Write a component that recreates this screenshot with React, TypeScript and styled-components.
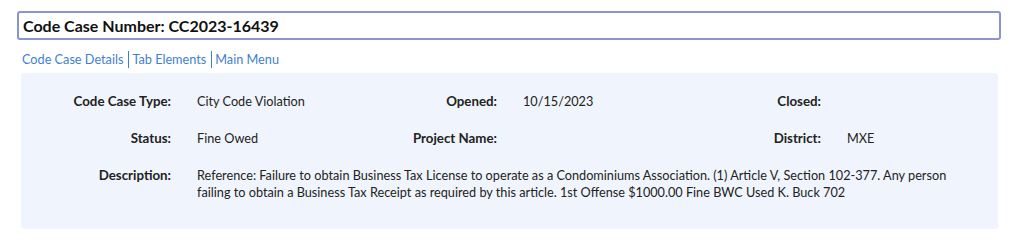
import styled, { createGlobalStyle } from "styled-components";

const GlobalStyle = createGlobalStyle`
  body {
    margin: 0;
    background: #fff;
    font-family: Lato, "Open Sans", Arial, sans-serif;
    color: #222;
  }
`;

const Page = styled.div`
  padding: 11px 23px 0 17px;
`;

const TitleBox = styled.div`
  height: 25px;
  border: 2px solid #8c92d6;
  border-radius: 3px;
  display: flex;
  align-items: center;
  padding: 0 4px;
`;

const Title = styled.h1`
  margin: 0;
  font-size: 16px;
  font-weight: 700;
  color: #111;
`;

const Nav = styled.nav`
  display: flex;
  align-items: center;
  margin: 11px 0 5px 5px;
  font-size: 12.7px;
  line-height: 17px;
`;

const NavLink = styled.a<{ $divider?: boolean }>`
  color: #3f7fd2;
  text-decoration: none;
  cursor: pointer;
  padding-left: ${(p) => (p.$divider ? "3px" : "0")};
  margin-left: ${(p) => (p.$divider ? "5px" : "0")};
  border-left: ${(p) => (p.$divider ? "1px solid #3f7fd2" : "none")};
`;

const Panel = styled.section`
  margin: 0 3px 0 4px;
  background: #f0f5fd;
  border-radius: 3px;
  padding: 20px 30px 28px 0;
  display: grid;
  grid-template-columns: 150px 150px 124px 150px 122px 1fr;
  column-gap: 26px;
  row-gap: 20px;
  line-height: 17px;
`;

const Label = styled.div`
  text-align: right;
  font-size: 13.3px;
  font-weight: 700;
  color: #222;
`;

const Value = styled.div<{ $wide?: boolean }>`
  font-size: 12.7px;
  color: #222;
  grid-column: ${(p) => (p.$wide ? "2 / -1" : "auto")};
`;

export default function App() {
  return (
    <>
      <GlobalStyle />
      <Page>
        <TitleBox>
          <Title>Code Case Number: CC2023-16439</Title>
        </TitleBox>
        <Nav>
          <NavLink>Code Case Details</NavLink>
          <NavLink $divider>Tab Elements</NavLink>
          <NavLink $divider>Main Menu</NavLink>
        </Nav>
        <Panel>
          <Label>Code Case Type:</Label>
          <Value>City Code Violation</Value>
          <Label>Opened:</Label>
          <Value>10/15/2023</Value>
          <Label>Closed:</Label>
          <Value></Value>

          <Label>Status:</Label>
          <Value>Fine Owed</Value>
          <Label>Project Name:</Label>
          <Value></Value>
          <Label>District:</Label>
          <Value>MXE</Value>

          <Label>Description:</Label>
          <Value $wide>
            Reference: Failure to obtain Business Tax License to operate as a
            Condominiums Association. (1) Article V, Section 102-377. Any person
            failing to obtain a Business Tax Receipt as required by this
            article. 1st Offense $1000.00 Fine BWC Used K. Buck 702
          </Value>
        </Panel>
      </Page>
    </>
  );
}
